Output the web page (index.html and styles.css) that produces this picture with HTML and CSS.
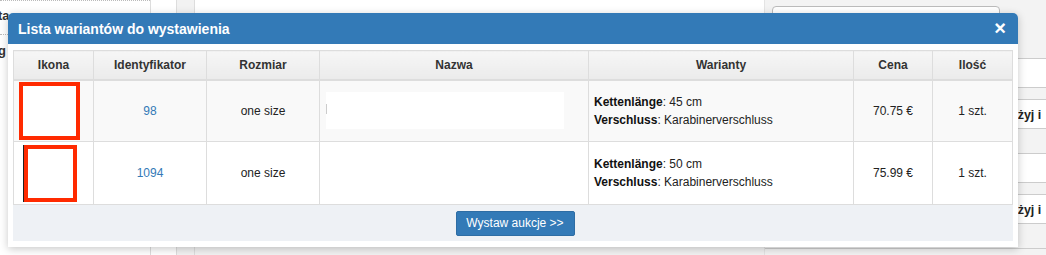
FILE: index.html
```html
<!DOCTYPE html>
<html lang="pl">
<head>
<meta charset="utf-8">
<title>Lista wariantów</title>
<link rel="stylesheet" href="styles.css">
</head>
<body>
<div class="page">
  <div class="side">
    <div class="side-row dotted"><span class="side-txt">ta</span></div>
    <div class="side-row dotted"><span class="side-txt">g</span></div>
    <div class="side-row"></div>
  </div>
  <div class="narrow a"></div>
  <div class="narrow b"></div>
  <div class="main">
    <div class="main-top"></div>
    <div class="main-bottom"><div class="main-bar"></div></div>
  </div>
  <div class="right">
    <div class="right-input"></div>
    <div class="right-rows">
      <div class="r-row w"></div>
      <div class="r-row g s"></div>
      <div class="r-row w"><b>użyj i</b></div>
      <div class="r-row g l"></div>
      <div class="r-row w"></div>
      <div class="r-row g s"></div>
      <div class="r-row w"><b>użyj i</b></div>
      <div class="r-row g l"></div>
    </div>
  </div>
</div>

<div class="modal">
  <div class="modal-head">
    <span class="modal-title">Lista wariantów do wystawienia</span>
    <span class="close">×</span>
  </div>
  <div class="modal-body">
    <table class="grid">
      <thead>
        <tr>
          <th class="c-ikona">Ikona</th>
          <th class="c-id">Identyfikator</th>
          <th class="c-roz">Rozmiar</th>
          <th class="c-naz">Nazwa</th>
          <th class="c-war">Warianty</th>
          <th class="c-cena">Cena</th>
          <th class="c-ilosc">Ilość</th>
        </tr>
      </thead>
      <tbody>
        <tr class="odd">
          <td class="icon-cell"><div class="thumb t1"></div></td>
          <td><a class="link">98</a></td>
          <td>one size</td>
          <td class="name-cell"><div class="name-box"><span class="tick"></span></div></td>
          <td class="var"><b>Kettenlänge</b>: 45 cm<br><b>Verschluss</b>: Karabinerverschluss</td>
          <td>70.75 €</td>
          <td>1 szt.</td>
        </tr>
        <tr>
          <td class="icon-cell"><div class="thumb t2"></div></td>
          <td><a class="link">1094</a></td>
          <td>one size</td>
          <td class="name-cell"></td>
          <td class="var"><b>Kettenlänge</b>: 50 cm<br><b>Verschluss</b>: Karabinerverschluss</td>
          <td>75.99 €</td>
          <td>1 szt.</td>
        </tr>
      </tbody>
    </table>
    <div class="modal-foot">
      <button class="btn">Wystaw aukcje &gt;&gt;</button>
    </div>
  </div>
</div>
</body>
</html>
```

FILE: styles.css
```css
* { box-sizing: border-box; }
html, body { margin: 0; padding: 0; }
body {
  width: 1046px;
  height: 255px;
  overflow: hidden;
  font-family: "Liberation Sans", Arial, sans-serif;
  font-size: 12px;
  color: #222;
  background: #f4f4f4;
  position: relative;
}

/* background page */
.page {
  display: flex;
  height: 255px;
}
.side {
  width: 151px;
  background: #fff;
  border-right: 1px solid #ddd;
}
.side-row {
  height: 33px;
  padding: 8px 0 0 0;
  font-weight: bold;
  font-size: 13px;
  color: #333;
}
.side-row.dotted { border-top: 1px dotted #bbb; }
.side-row:first-child { height: 34px; padding-top: 7px; }
.side-txt { margin-left: -2px; }
.narrow.a {
  width: 26px;
  background: #fff;
  border-right: 1px solid #ddd;
}
.narrow.b {
  width: 18px;
  background: #f2f2f2;
  border-right: 1px solid #ddd;
}
.main {
  width: 570px;
  display: flex;
  flex-direction: column;
  background: #fff;
  border-right: 1px solid #e4e4e4;
}
.main-top { height: 240px; }
.main-bottom {
  flex: 1;
  padding-left: 5px;
  background: #f2f2f2;
}
.main-bar {
  height: 5px;
  border-top: 2px solid #ccc;
  border-left: 1px solid #ccc;
  background: #e8e8e8;
}
.right {
  flex: 1;
  background: #f3f3f3;
  padding: 6px 0 0 7px;
}
.right-input {
  width: 228px;
  height: 30px;
  background: #fff;
  border: 1px solid #bbb;
  border-radius: 4px;
}
.right-rows {
  margin-top: 22px;
  margin-left: -7px;
  border-top: 1px solid #ccc;
}
.r-row {
  border-bottom: 1px solid #ccc;
}
.r-row.w {
  background: #fff;
  height: 29px;
  padding: 8px 0 0 245px;
  font-size: 12.5px;
  color: #222;
}
.r-row.g { background: #f3f3f3; }
.r-row.g.s { height: 12px; }
.r-row.g.l { height: 25px; }

/* modal */
.modal {
  position: absolute;
  left: 8px;
  top: 13px;
  width: 1010px;
  height: 234px;
  background: #fff;
  border-radius: 5px 5px 0 0;
  box-shadow: 0 2px 8px rgba(0,0,0,0.22);
}
.modal-head {
  height: 31px;
  background: #337ab7;
  border-radius: 5px 5px 0 0;
  display: flex;
  align-items: center;
  justify-content: space-between;
  padding: 0 12px 0 10px;
  color: #fff;
}
.modal-title {
  font-size: 14px;
  font-weight: bold;
}
.close {
  font-size: 20px;
  font-weight: bold;
  line-height: 1;
  margin-top: -2px;
}
.modal-body {
  padding: 6px 5px 6px 5px;
}
.grid {
  width: 1000px;
  border-collapse: collapse;
  table-layout: fixed;
  border: 1px solid #ddd;
}
.grid th {
  height: 29px;
  font-size: 12px;
  font-weight: bold;
  color: #333;
  background: linear-gradient(#f6f6f6, #ebebeb);
  border: 1px solid #ddd;
  border-bottom: 2px solid #ddd;
  text-align: center;
  padding: 0;
}
.c-ikona { width: 80px; }
.c-id { width: 113px; }
.c-roz { width: 113px; }
.c-naz { width: 269px; }
.c-war { width: 265px; }
.c-cena { width: 79px; }
.c-ilosc { width: 80px; }
.grid td {
  border: 1px solid #ddd;
  text-align: center;
  vertical-align: middle;
  font-size: 12px;
  color: #222;
  padding: 0;
  line-height: 18px;
}
.grid tbody tr { height: 62px; }
.grid tbody tr + tr { height: 63px; }
.grid tr.odd td { background: #f9f9f9; }
.link { color: #337ab7; }
.icon-cell { text-align: left !important; }
.thumb {
  background: #fff;
  border: 4px solid #ff2a00;
}
.thumb.t1 {
  width: 61px;
  height: 58px;
  margin-left: 5px;
}
.thumb.t2 {
  width: 53px;
  height: 57px;
  margin-left: 10px;
  box-shadow: -1px 0 0 #222;
}
.name-cell { text-align: left !important; }
.name-box {
  width: 238px;
  height: 37px;
  margin-left: 6px;
  background: #fff;
  position: relative;
}
.tick {
  position: absolute;
  left: 0;
  top: 12px;
  width: 1px;
  height: 10px;
  background: #ccc;
}
.var {
  text-align: left !important;
  padding-left: 5px !important;
}
.var b { color: #111; }
.modal-foot {
  height: 36px;
  background: #eef1f5;
  display: flex;
  justify-content: center;
  align-items: center;
}
.btn {
  margin-left: 4px;
  width: 119px;
  height: 25px;
  background: #337ab7;
  color: #fff;
  border: 1px solid #2e6da4;
  border-radius: 2px;
  font-family: "Liberation Sans", Arial, sans-serif;
  font-size: 12px;
  padding: 0;
}
```
